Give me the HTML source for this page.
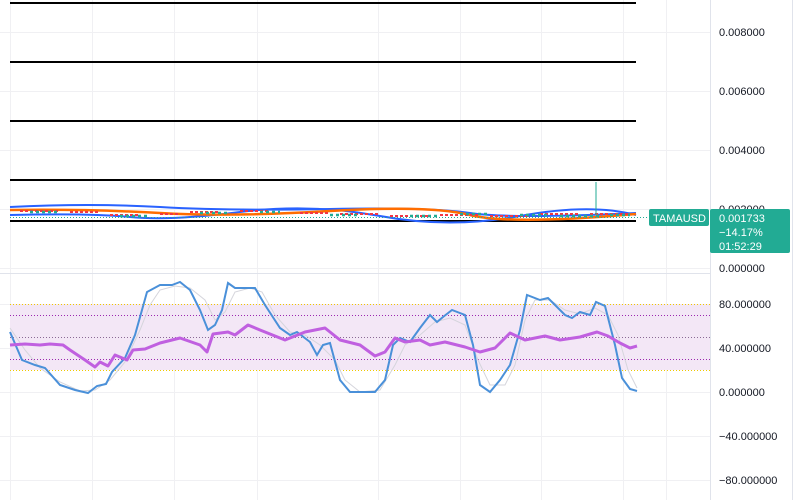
<!DOCTYPE html>
<html><head><meta charset="utf-8"><style>
html,body{margin:0;padding:0;background:#fff;width:802px;height:500px;overflow:hidden;font-family:"Liberation Sans",sans-serif}
</style></head><body>
<svg width="802" height="500" viewBox="0 0 802 500" xmlns="http://www.w3.org/2000/svg" style="position:absolute;left:0;top:0">
<g stroke="#f0f0f3" stroke-width="1">
<line x1="10.5" y1="0" x2="10.5" y2="500"/><line x1="92.5" y1="0" x2="92.5" y2="500"/><line x1="174.5" y1="0" x2="174.5" y2="500"/><line x1="257.5" y1="0" x2="257.5" y2="500"/><line x1="378.5" y1="0" x2="378.5" y2="500"/><line x1="460.5" y1="0" x2="460.5" y2="500"/><line x1="541.5" y1="0" x2="541.5" y2="500"/><line x1="623.5" y1="0" x2="623.5" y2="500"/><line x1="666.5" y1="0" x2="666.5" y2="500"/>
<line x1="0" y1="32.5" x2="710" y2="32.5"/><line x1="0" y1="91.5" x2="710" y2="91.5"/><line x1="0" y1="150.5" x2="710" y2="150.5"/><line x1="0" y1="209.5" x2="710" y2="209.5"/><line x1="0" y1="268.5" x2="710" y2="268.5"/>
<line x1="0" y1="304.5" x2="710" y2="304.5"/><line x1="0" y1="348.5" x2="710" y2="348.5"/><line x1="0" y1="392.5" x2="710" y2="392.5"/><line x1="0" y1="436.5" x2="710" y2="436.5"/><line x1="0" y1="480.5" x2="710" y2="480.5"/>
</g>
<line x1="0" y1="273.5" x2="710" y2="273.5" stroke="#e0e3eb"/>
<line x1="710.5" y1="0" x2="710.5" y2="500" stroke="#e0e3eb"/>
<line x1="792.5" y1="0" x2="792.5" y2="500" stroke="#e0e3eb"/>
<g stroke="#000" stroke-width="2">
<line x1="10" y1="3" x2="636" y2="3"/><line x1="10" y1="62" x2="636" y2="62"/><line x1="10" y1="121" x2="636" y2="121"/><line x1="10" y1="180" x2="636" y2="180"/><line x1="10" y1="221" x2="636" y2="221"/>
</g>
<path d="M10,207 Q90,203 160,207 T330,209 T470,213 T636,213" fill="none" stroke="#2962ff" stroke-width="2"/>
<path d="M10,215 Q90,213 130,217 T240,212 T380,216 T520,216 T636,215" fill="none" stroke="#2962ff" stroke-width="2"/>
<path d="M10,210 Q90,209 160,213 T330,211 T470,215 T636,214" fill="none" stroke="#ff6d00" stroke-width="2.5"/>
<path d="M20,211h40M70,212h30M110,215h30M160,214h20M190,212h30M240,211h30M300,213h30M340,214h40M390,216h40M440,215h40M490,216h40M540,214h40M590,214h40" stroke="#f23645" stroke-width="2" stroke-dasharray="3 2"/>
<path d="M30,212h30M120,216h30M200,213h30M260,212h20M330,215h30M410,216h30M460,214h30M520,215h30M560,216h40M610,215h20" stroke="#22ab94" stroke-width="2.5" stroke-dasharray="3 3"/>
<line x1="596" y1="182" x2="596" y2="215" stroke="#22ab94"/>
<line x1="10" y1="217.5" x2="648" y2="217.5" stroke="#22ab94" stroke-dasharray="1 2"/>
<rect x="10" y="304" width="700" height="66" fill="#f3e7f6"/>
<line x1="10" y1="304.5" x2="710" y2="304.5" stroke="#f0c800" stroke-dasharray="1 2"/>
<line x1="10" y1="370.5" x2="710" y2="370.5" stroke="#f0c800" stroke-dasharray="1 2"/>
<line x1="10" y1="315.5" x2="710" y2="315.5" stroke="#9c27b0" stroke-dasharray="1 2"/>
<line x1="10" y1="359.5" x2="710" y2="359.5" stroke="#9c27b0" stroke-dasharray="1 2"/>
<line x1="10" y1="337.5" x2="710" y2="337.5" stroke="#8a6a95" stroke-dasharray="1 2"/>
<polyline fill="none" stroke="#d5d5dc" stroke-width="1" points="10,328 25,350 40,368 60,382 80,391 95,390 110,380 125,362 140,330 150,305 160,290 175,286 190,288 205,300 215,320 225,312 235,292 250,288 262,292 275,315 290,332 305,335 320,345 335,360 345,380 360,392 380,390 395,365 405,345 420,335 435,322 450,318 465,325 478,360 490,385 505,385 515,365 525,320 535,300 550,300 565,310 580,314 595,308 608,315 618,335 628,370 637,388"/>
<polyline fill="none" stroke="#4a90d9" stroke-width="2" points="10,332 22,360 35,365 45,368 60,385 75,390 88,393 97,386 106,384 112,372 125,358 135,335 147,292 160,285 172,285 180,282 190,290 200,310 208,330 215,325 222,310 228,283 235,288 255,288 265,305 280,328 290,335 297,332 310,342 317,355 323,345 330,343 340,380 350,392 375,392 385,380 393,345 400,338 410,342 420,328 430,315 437,322 443,317 452,310 465,315 473,345 480,385 490,392 500,380 510,365 520,330 527,295 540,300 548,298 555,305 565,315 572,318 580,312 590,315 596,302 605,306 615,345 622,378 630,389 637,391"/>
<polyline fill="none" stroke="#c060e0" stroke-width="3" stroke-linejoin="round" points="10,345 25,344 40,345 50,344 63,345 70,350 85,360 95,367 100,362 108,366 115,355 127,360 133,350 145,349 160,343 180,338 200,345 207,352 213,334 228,332 235,335 248,325 260,330 285,340 305,332 325,328 340,340 360,345 375,356 385,352 395,338 405,342 420,340 430,345 445,342 465,347 480,352 495,348 510,333 525,340 545,336 560,340 580,337 597,332 608,336 620,343 630,348 637,346"/>
<g font-size="11" fill="#131722">
<text x="719" y="36">0.008000</text><text x="719" y="95">0.006000</text><text x="719" y="154">0.004000</text><text x="719" y="213">0.002000</text><text x="719" y="272">0.000000</text>
<text x="719" y="308">80.000000</text><text x="719" y="352">40.000000</text><text x="719" y="396">0.000000</text><text x="719" y="440">−40.000000</text><text x="719" y="484">−80.000000</text>
</g>
<rect x="649" y="209" width="60" height="17" rx="2" fill="#22ab94"/>
<text x="653" y="222" font-size="11" fill="#fff">TAMAUSD</text>
<rect x="710" y="209" width="80" height="44" rx="2" fill="#22ab94"/>
<g font-size="11" fill="#fff"><text x="719" y="222">0.001733</text><text x="719" y="236">−14.17%</text><text x="719" y="250">01:52:29</text></g>
</svg>
</body></html>
